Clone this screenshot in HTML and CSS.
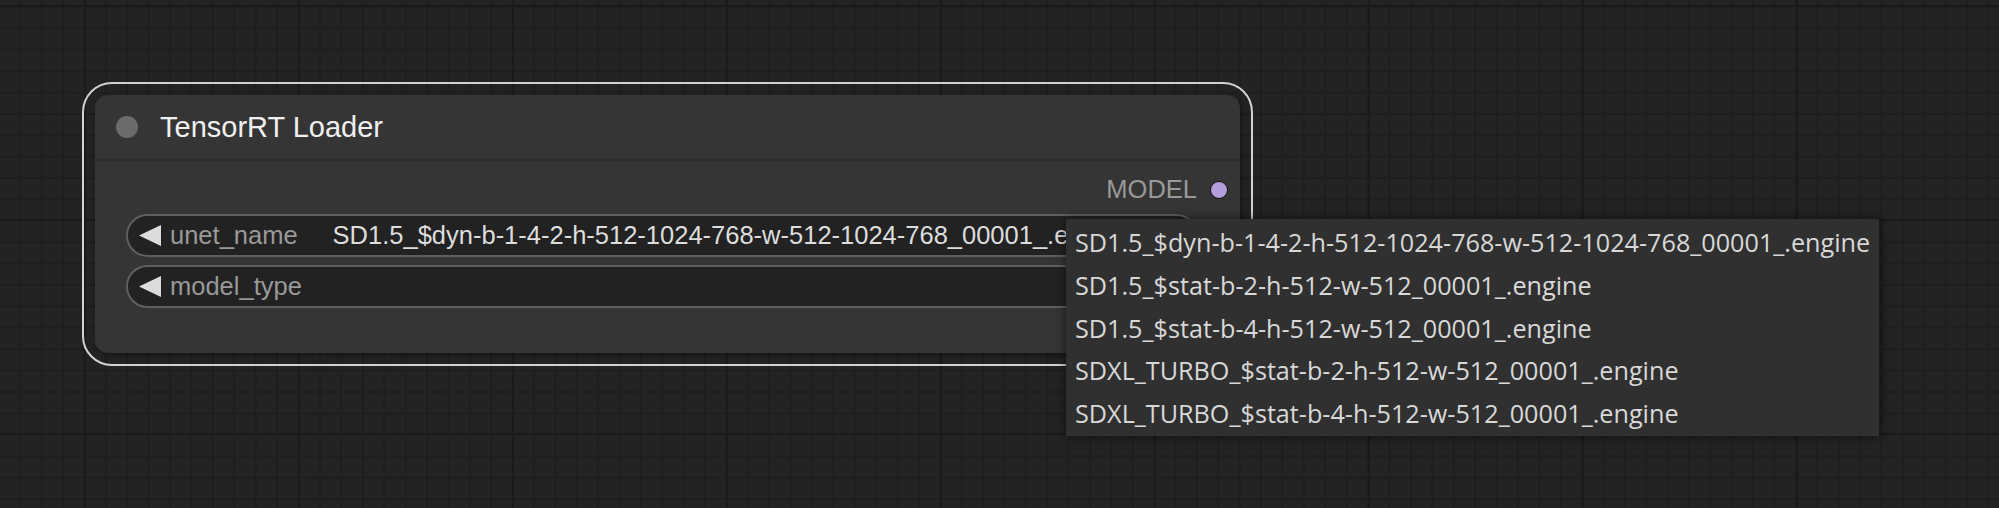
FILE: index.html
```html
<!DOCTYPE html>
<html lang="en">
<head>
  <meta charset="UTF-8" />
  <title>TensorRT Loader</title>
  <link rel="stylesheet" href="styles.css">
</head>
<body>
  <div class="canvas">
    <!-- Node (selected) -->
    <div class="node-select">
      <div class="node">
        <div class="node-title">
          <span class="title-dot"></span>
          <span class="title-text">TensorRT Loader</span>
        </div>
        <div class="slots">
          <span class="slot-name">MODEL</span>
          <span class="slot-dot"></span>
        </div>
        <div class="widgets">
          <div class="widget">
            <svg class="arrow" width="22" height="21" viewBox="0 0 22 21"><polygon points="22,0 22,21 0,10.5" /></svg>
            <span class="w-label">unet_name</span>
            <span class="w-value">SD1.5_$dyn-b-1-4-2-h-512-1024-768-w-512-1024-768_00001_.engine</span>
          </div>
          <div class="widget">
            <svg class="arrow" width="22" height="21" viewBox="0 0 22 21"><polygon points="22,0 22,21 0,10.5" /></svg>
            <span class="w-label">model_type</span>
            <span class="w-value"></span>
          </div>
        </div>
      </div>
    </div>

    <!-- Combo dropdown -->
    <div class="combo-menu">
      <div class="menu-entry">SD1.5_$dyn-b-1-4-2-h-512-1024-768-w-512-1024-768_00001_.engine</div>
      <div class="menu-entry">SD1.5_$stat-b-2-h-512-w-512_00001_.engine</div>
      <div class="menu-entry">SD1.5_$stat-b-4-h-512-w-512_00001_.engine</div>
      <div class="menu-entry">SDXL_TURBO_$stat-b-2-h-512-w-512_00001_.engine</div>
      <div class="menu-entry">SDXL_TURBO_$stat-b-4-h-512-w-512_00001_.engine</div>
    </div>
  </div>
</body>
</html>
```

FILE: styles.css
```css
* {
  margin: 0;
  padding: 0;
  box-sizing: border-box;
}
body {
  width: 1999px;
  height: 508px;
  overflow: hidden;
  background: #222;
  font-family: 'Liberation Sans', Arial, sans-serif;
}
/* Graph canvas with grid */
.canvas {
  position: relative;
  width: 1999px;
  height: 508px;
  background-color: #232323;
  background-image:
    linear-gradient(to right, #1a1a1a 2px, transparent 2px),
    linear-gradient(to bottom, #1a1a1a 2px, transparent 2px),
    linear-gradient(to right, #1e1e1e 2px, transparent 2px),
    linear-gradient(to bottom, #1e1e1e 2px, transparent 2px);
  background-size: 214px 214px, 214px 214px, 21.4px 21.4px, 21.4px 21.4px;
  background-position: 84px 0, 0 219px, 19.5px 0, 0 6px;
}
/* Selected node outline */
.node-select {
  position: absolute;
  left: 82px;
  top: 82px;
  width: 1171px;
  height: 284px;
  border: 2px solid #d2d2d2;
  border-radius: 30px;
  padding: 11px;
}
.node {
  width: 1145px;
  height: 258px;
  background: #353535;
  border-radius: 13px;
  box-shadow: 2px 3px 6px rgba(0,0,0,0.35);
}
.node-title {
  height: 66px;
  display: flex;
  align-items: center;
  padding-left: 21px;
  border-bottom: 2px solid #2d2d2d;
}
.title-dot {
  width: 22px;
  height: 22px;
  border-radius: 50%;
  background: #6b6b6b;
  margin-right: 22px;
}
.title-text {
  font-size: 29px;
  color: #f0f0f0;
}
/* Output slot */
.slots {
  margin-top: 7px;
  height: 43px;
  display: flex;
  justify-content: flex-end;
  align-items: center;
  padding-right: 12px;
}
.slot-name {
  font-size: 25.5px;
  color: #999;
  margin-right: 13px;
}
.slot-dot {
  width: 18px;
  height: 18px;
  border-radius: 50%;
  background: #b39ddb;
  border: 1.5px solid #111;
}
/* Widgets */
.widgets {
  display: flex;
  flex-direction: column;
  gap: 8px;
  padding: 3px 42px 0 31px;
}
.widget {
  height: 43px;
  display: flex;
  align-items: center;
  background: #222;
  border: 2px solid #5f5f5f;
  border-radius: 22px;
  padding-left: 11px;
  overflow: hidden;
  font-size: 25.5px;
}
.arrow {
  fill: #dcdcdc;
  flex-shrink: 0;
}
.w-label {
  color: #999;
  margin-left: 9px;
  white-space: nowrap;
}
.w-value {
  color: #ddd;
  margin-left: 35px;
  white-space: nowrap;
}
/* Dropdown menu */
.combo-menu {
  position: absolute;
  left: 1066px;
  top: 219px;
  width: 813px;
  height: 217px;
  background: #303030;
  padding-top: 2px;
  box-shadow: 0 0 10px rgba(0,0,0,0.6);
  font-family: 'Open Sans', sans-serif;
}
.menu-entry {
  height: 42.8px;
  line-height: 42.8px;
  padding-left: 9px;
  font-size: 25.2px;
  color: #d8d8d8;
  white-space: nowrap;
}
```
